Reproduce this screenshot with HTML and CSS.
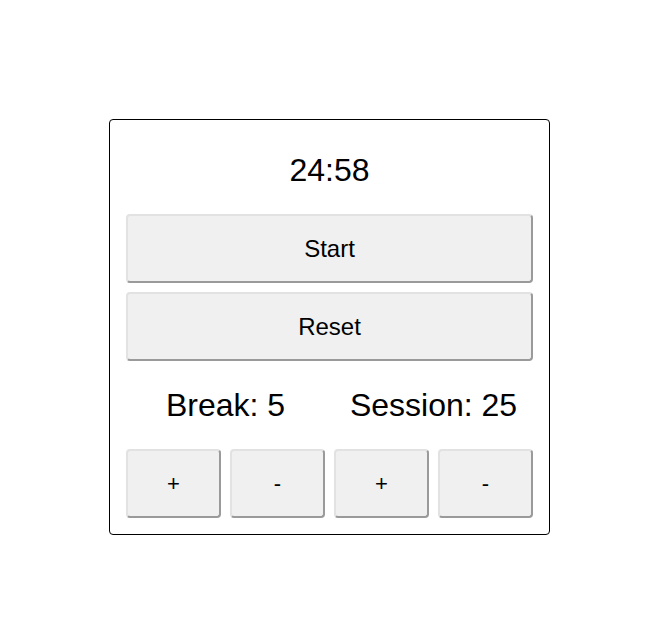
FILE: index.html
```html
<!DOCTYPE html>
<html>
<head>
<meta charset="utf-8">
<link rel="stylesheet" href="styles.css">
</head>
<body>
<div class="clock">
  <div class="timer">24:58</div>
  <button class="btn wide">Start</button>
  <button class="btn wide second">Reset</button>
  <div class="labels">
    <div class="label">Break: 5</div>
    <div class="label">Session: 25</div>
  </div>
  <div class="controls">
    <button class="btn small">+</button>
    <button class="btn small">-</button>
    <button class="btn small">+</button>
    <button class="btn small">-</button>
  </div>
</div>
</body>
</html>
```
FILE: styles.css
```css
html, body {
  margin: 0;
  padding: 0;
  background: #fff;
}
body {
  font-family: "Liberation Sans", Arial, sans-serif;
  color: #000;
  padding-top: 119px;
  padding-left: 109px;
}
.clock {
  width: 407px;
  padding: 16px;
  border: 1px solid #000;
  border-radius: 4px;
  display: flex;
  flex-direction: column;
}
.timer {
  font-size: 32px;
  line-height: 37px;
  text-align: center;
  margin-top: 16px;
  margin-bottom: 25px;
}
.btn {
  font-family: "Liberation Sans", Arial, sans-serif;
  background: #f0f0f0;
  color: #000;
  border: 2px solid;
  border-color: #e2e2e2 #9a9a9a #9a9a9a #e2e2e2;
  border-radius: 4px;
  height: 69px;
  padding: 0;
  margin: 0;
}
.wide {
  width: 100%;
  font-size: 24px;
}
.second {
  margin-top: 9px;
}
.labels {
  display: grid;
  grid-template-columns: 1fr 1fr;
  column-gap: 9px;
  margin-top: 26px;
  margin-bottom: 25px;
}
.label {
  font-size: 32px;
  line-height: 37px;
  text-align: center;
}
.controls {
  display: grid;
  grid-template-columns: repeat(4, 1fr);
  column-gap: 9px;
}
.small {
  font-size: 22px;
}
```
